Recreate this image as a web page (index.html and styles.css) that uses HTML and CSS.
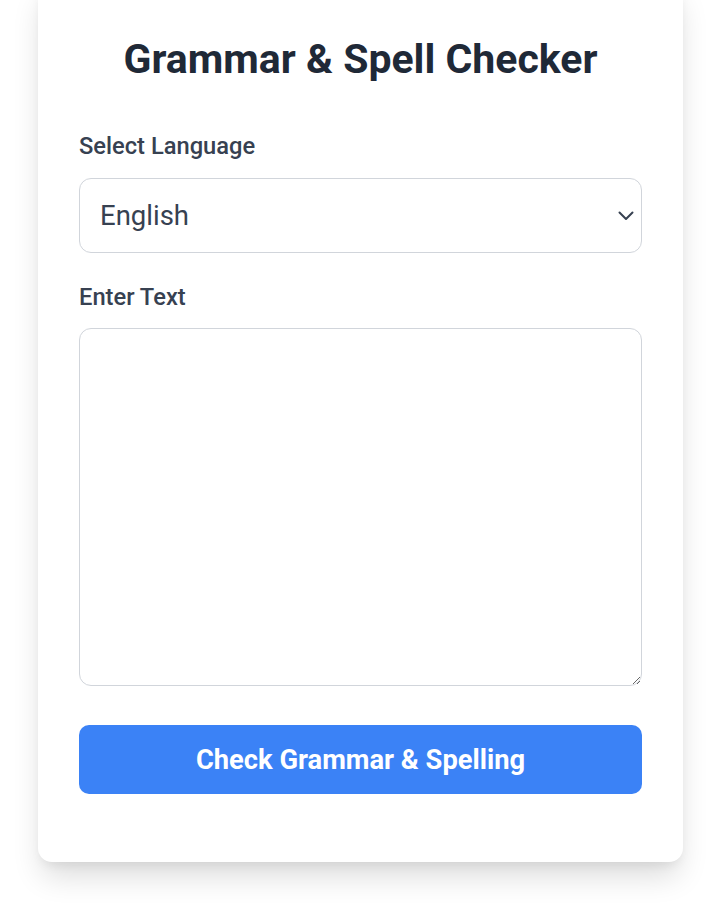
FILE: index.html
```html
<!DOCTYPE html>
<html>
<head>
    <meta charset="UTF-8">
    <title>Grammar &amp; Spell Checker</title>
    <meta name="viewport" content="width=device-width, initial-scale=1.0">
    <link rel="stylesheet" href="styles.css">
</head>
<body>
    <div class="card">
        <h1>Grammar &amp; Spell Checker</h1>
        <form id="checkForm">
            <label for="language">Select Language</label>
            <div class="select-wrap">
                <select id="language">
                    <option>English</option>
                    <option>Spanish</option>
                    <option>French</option>
                    <option>German</option>
                </select>
                <svg class="chevron" width="16" height="10" viewBox="0 0 16 10">
                    <path d="M1.5 1.5 L8 8 L14.5 1.5" fill="none" stroke="#374151" stroke-width="2" stroke-linecap="round" stroke-linejoin="round"/>
                </svg>
            </div>

            <label for="text" class="text-label">Enter Text</label>
            <textarea id="text"></textarea>

            <button type="button">Check Grammar &amp; Spelling</button>
        </form>
    </div>
</body>
</html>
```

FILE: styles.css
```css
body {
    font-family: Roboto, "Noto Sans", Arial, sans-serif;
    margin: 0;
    padding-bottom: 41px;
    background-color: #fff;
}
.card {
    width: 645px;
    margin: -20px 0 0 38px;
    padding: 55px 41px 68px;
    box-sizing: border-box;
    background-color: #fff;
    border-radius: 14px;
    box-shadow: 0 18px 30px -4px rgba(0, 0, 0, 0.14), 0 6px 12px -4px rgba(0, 0, 0, 0.08);
}
h1 {
    text-align: center;
    margin: 0 0 48px;
    font-size: 41px;
    font-weight: 700;
    line-height: 48px;
    color: #1f2937;
}
form {
    display: flex;
    flex-direction: column;
}
label {
    display: block;
    font-size: 23.7px;
    font-weight: 500;
    line-height: 30px;
    color: #374151;
    margin-bottom: 17px;
}
.text-label {
    margin-bottom: 16px;
}
.select-wrap {
    position: relative;
    margin-bottom: 29px;
}
select {
    width: 100%;
    height: 75px;
    padding: 0 20px;
    font-family: inherit;
    font-size: 27.5px;
    color: #374151;
    background-color: #fff;
    border: 1px solid #d1d5db;
    border-radius: 12px;
    appearance: none;
    -webkit-appearance: none;
}
.chevron {
    position: absolute;
    right: 8px;
    top: 33px;
    pointer-events: none;
}
textarea {
    width: 100%;
    height: 358px;
    box-sizing: border-box;
    border: 1px solid #d1d5db;
    border-radius: 12px;
    margin-bottom: 39px;
    font-family: inherit;
    font-size: 22px;
}
button {
    width: 100%;
    height: 69px;
    background-color: #3b82f6;
    color: #fff;
    border: none;
    border-radius: 10px;
    font-family: inherit;
    font-size: 27.3px;
    font-weight: 700;
    cursor: pointer;
}
```
